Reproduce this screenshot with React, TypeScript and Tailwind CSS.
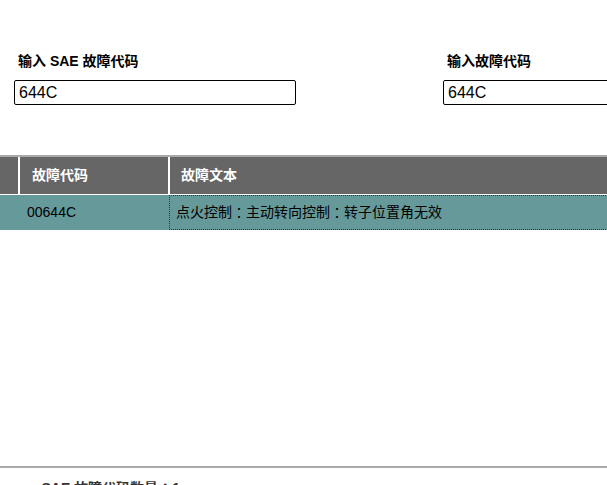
import React from "react"

const font = { fontFamily: '"Liberation Sans", Arial, "Noto Sans CJK SC", sans-serif' }

// full-width colon drawn centred, as in the original
function Colon() {
  return <span style={{ fontFamily: '"Noto Sans CJK JP", sans-serif' }}>：</span>
}

export default function App() {
  return (
    <div className="relative h-[485px] w-[607px] overflow-hidden bg-white text-black" style={font}>
      <div className="w-[900px]">
        {/* search inputs */}
        <div className="flex pt-[53px]">
          <div className="ml-[14px] w-[282px]">
            <div className="pl-[4px] text-[14px] font-bold leading-[17px]">输入 SAE 故障代码</div>
            <input
              defaultValue="644C"
              className="mt-[10px] h-[25px] w-[282px] rounded-[2px] border border-black px-[4px] text-[16px] leading-[20px] outline-none"
            />
          </div>
          <div className="ml-[147px] w-[282px]">
            <div className="pl-[4px] text-[14px] font-bold leading-[17px]">输入故障代码</div>
            <input
              defaultValue="644C"
              className="mt-[10px] h-[25px] w-[282px] rounded-[2px] border border-black px-[4px] text-[16px] leading-[20px] outline-none"
            />
          </div>
        </div>

        {/* results table */}
        <div className="mt-[50px] border-t-2 border-[#aaaaaa]">
          <div className="flex h-[37px] bg-[#666666] text-[14px] font-bold text-white">
            <div className="w-[20px] border-r-2 border-white" />
            <div className="flex w-[150px] items-center border-r-2 border-white pl-[12px]">故障代码</div>
            <div className="flex flex-1 items-center pl-[11px]">故障文本</div>
          </div>
          <div className="h-px bg-white" />
          <div className="flex h-[35px] bg-[#669999] text-[14px]">
            <div className="flex w-[169px] items-center pl-[27px]">00644C</div>
            <div className="flex flex-1 items-center border border-dotted border-[#333333] pl-[6px]">
              点火控制<Colon />主动转向控制<Colon />转子位置角无效
            </div>
          </div>
        </div>
      </div>

      {/* footer */}
      <div className="absolute left-0 top-[466px] w-full border-t-2 border-[#aaaaaa]">
        <div className="mt-[9px] flex items-center text-[14px] font-bold text-[#333333]">
          <span className="ml-[3px] text-[9px]">●</span>
          <span className="ml-[33px]">SAE 故障代码数量<Colon />1</span>
        </div>
      </div>
    </div>
  )
}
